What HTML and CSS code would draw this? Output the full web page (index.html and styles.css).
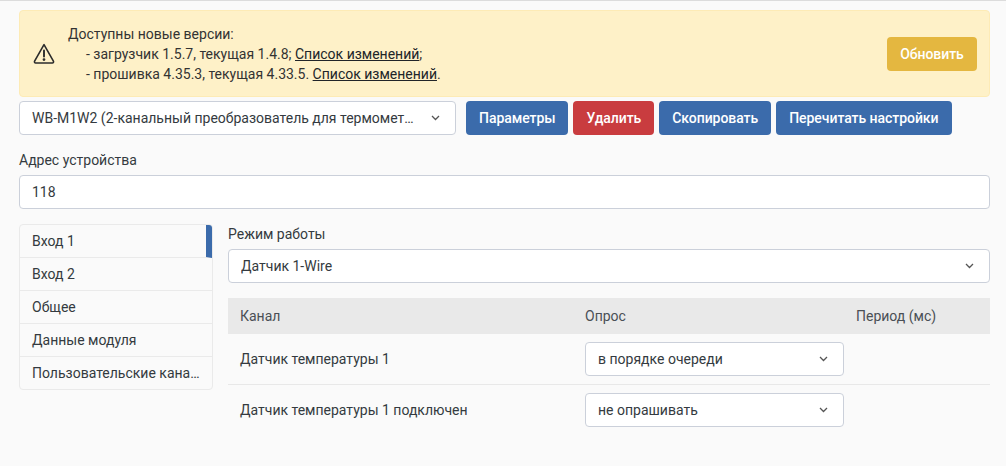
FILE: index.html
```html
<!DOCTYPE html>
<html lang="ru">
<head>
<meta charset="utf-8">
<title>Устройство</title>
<link rel="stylesheet" href="styles.css">
</head>
<body>
<main class="page">
  <section class="banner">
    <svg class="warn-icon" width="22" height="22" viewBox="0 0 22 22" fill="none" stroke="#2b2b2b" stroke-width="1.6" stroke-linejoin="round" stroke-linecap="round"><path d="M11 1.6 L1.6 18.2 a1.2 1.2 0 0 0 1 1.8 H19.4 a1.2 1.2 0 0 0 1 -1.8 Z"/><path d="M11 7.5 V13.5" stroke-width="1.9"/><circle cx="11" cy="16.6" r=".6" fill="#2b2b2b"/></svg>
    <div class="banner-text">
      <div>Доступны новые версии:</div>
      <div class="indent">- загрузчик 1.5.7, текущая 1.4.8; <a href="#">Список изменений</a>;</div>
      <div class="indent">- прошивка 4.35.3, текущая 4.33.5. <a href="#">Список изменений</a>.</div>
    </div>
    <button class="btn btn-warning">Обновить</button>
  </section>

  <div class="toolbar">
    <div class="select device-select"><span class="select-value">WB-M1W2 (2-канальный преобразователь для термомет…</span><svg class="chev" width="9" height="6" viewBox="0 0 9 6"><path d="M1 1 L4.5 4.5 L8 1" fill="none" stroke="#555" stroke-width="1.3"/></svg></div>
    <div class="actions">
      <button class="btn btn-primary">Параметры</button>
      <button class="btn btn-danger">Удалить</button>
      <button class="btn btn-primary">Скопировать</button>
      <button class="btn btn-primary">Перечитать настройки</button>
    </div>
  </div>

  <div class="field address">
    <label class="label">Адрес устройства</label>
    <div class="input">118</div>
  </div>

  <div class="columns">
    <nav class="tabs">
      <div class="tab active">Вход 1</div>
      <div class="tab">Вход 2</div>
      <div class="tab">Общее</div>
      <div class="tab">Данные модуля</div>
      <div class="tab">Пользовательские каналы</div>
    </nav>
    <div class="content">
      <div class="field">
        <label class="label">Режим работы</label>
        <div class="select"><span class="select-value">Датчик 1-Wire</span><svg class="chev" width="9" height="6" viewBox="0 0 9 6"><path d="M1 1 L4.5 4.5 L8 1" fill="none" stroke="#555" stroke-width="1.3"/></svg></div>
      </div>
      <table class="channels">
        <thead>
          <tr><th class="col-name">Канал</th><th class="col-poll">Опрос</th><th class="col-period">Период (мс)</th></tr>
        </thead>
        <tbody>
          <tr class="row-first">
            <td>Датчик температуры 1</td>
            <td><div class="select poll"><span class="select-value">в порядке очереди</span><svg class="chev" width="9" height="6" viewBox="0 0 9 6"><path d="M1 1 L4.5 4.5 L8 1" fill="none" stroke="#555" stroke-width="1.3"/></svg></div></td>
            <td></td>
          </tr>
          <tr>
            <td>Датчик температуры 1 подключен</td>
            <td><div class="select poll"><span class="select-value">не опрашивать</span><svg class="chev" width="9" height="6" viewBox="0 0 9 6"><path d="M1 1 L4.5 4.5 L8 1" fill="none" stroke="#555" stroke-width="1.3"/></svg></div></td>
            <td></td>
          </tr>
        </tbody>
      </table>
    </div>
  </div>
</main>
</body>
</html>
```

FILE: styles.css
```css
* { box-sizing: border-box; }
html, body { height: 100%; }
body {
  margin: 0;
  background: #fafafa;
  color: #343a40;
  font-family: Roboto, "Liberation Sans", sans-serif;
  font-size: 14px;
  line-height: 20px;
  overflow: hidden;
}
.page {
  border-top: 1px solid #dcdcdc;
  padding: 9px 16px 0 19px;
}
.banner {
  display: flex;
  align-items: center;
  height: 87px;
  padding: 0 12px 0 13px;
  background: #fef1c8;
  border: 1px solid #fdebb6;
  border-radius: 4px;
  color: #333;
}
.warn-icon { flex: none; margin-right: 13px; }
.banner-text { flex: 1; }
.indent { padding-left: 18px; }
.banner-text a { color: #212529; text-decoration: underline; }
.btn {
  height: 34px;
  padding: 0 12px;
  border: 1px solid transparent;
  border-radius: 4px;
  color: #fff;
  font: 500 14px/20px Roboto, "Liberation Sans", sans-serif;
  letter-spacing: -0.05px;
  white-space: nowrap;
}
.btn-primary { background: #3b6bab; }
.btn-danger { background: #c93c3f; }
.btn-warning { background: #e4b740; width: 90px; padding: 0; }
.toolbar {
  display: flex;
  align-items: center;
  margin-top: 4px;
  gap: 10px;
}
.actions { display: flex; gap: 5px; }
.select {
  display: flex;
  align-items: center;
  justify-content: space-between;
  height: 34px;
  padding: 0 15px 0 12px;
  background: #fff;
  border: 1px solid #cbd0da;
  border-radius: 4px;
  color: #343a40;
}
.select-value {
  overflow: hidden;
  white-space: nowrap;
  text-overflow: ellipsis;
  padding-right: 15px;
}
.chev { flex: none; }
.device-select { width: 437px; }
.address { margin-top: 15px; }
.label { display: block; margin-bottom: 5px; }
.input {
  height: 34px;
  padding: 6px 12px;
  background: #fff;
  border: 1px solid #cbd0da;
  border-radius: 4px;
}
.columns {
  display: flex;
  align-items: flex-start;
  gap: 15px;
  margin-top: 15px;
}
.tabs {
  flex: none;
  width: 194px;
  border: 1px solid #eaeaea;
  border-radius: 4px;
  overflow: hidden;
}
.tab {
  height: 33px;
  padding: 6px 12px;
  border-bottom: 1px solid #eaeaea;
  white-space: nowrap;
  overflow: hidden;
  text-overflow: ellipsis;
}
.tab:last-child { border-bottom: 0; height: 32px; }
.tab.active { border-right: 6px solid #3b6bab; padding-right: 6px; }
.content { flex: 1; min-width: 0; }
.channels {
  width: 100%;
  margin-top: 15px;
  border-collapse: collapse;
  table-layout: fixed;
}
.channels th {
  height: 36px;
  padding: 0 12px;
  background: #e9e9e9;
  color: #4a4f55;
  font-weight: 400;
  text-align: left;
}
.col-name { width: 345px; }
.col-poll { width: 283px; }
.channels .col-period { padding-left: 0; }
.channels td {
  height: 51px;
  padding: 0 12px;
  vertical-align: middle;
}
.channels .row-first td { height: 50px; border-bottom: 1px solid #e8e8e8; }
.poll { width: 259px; }
```
